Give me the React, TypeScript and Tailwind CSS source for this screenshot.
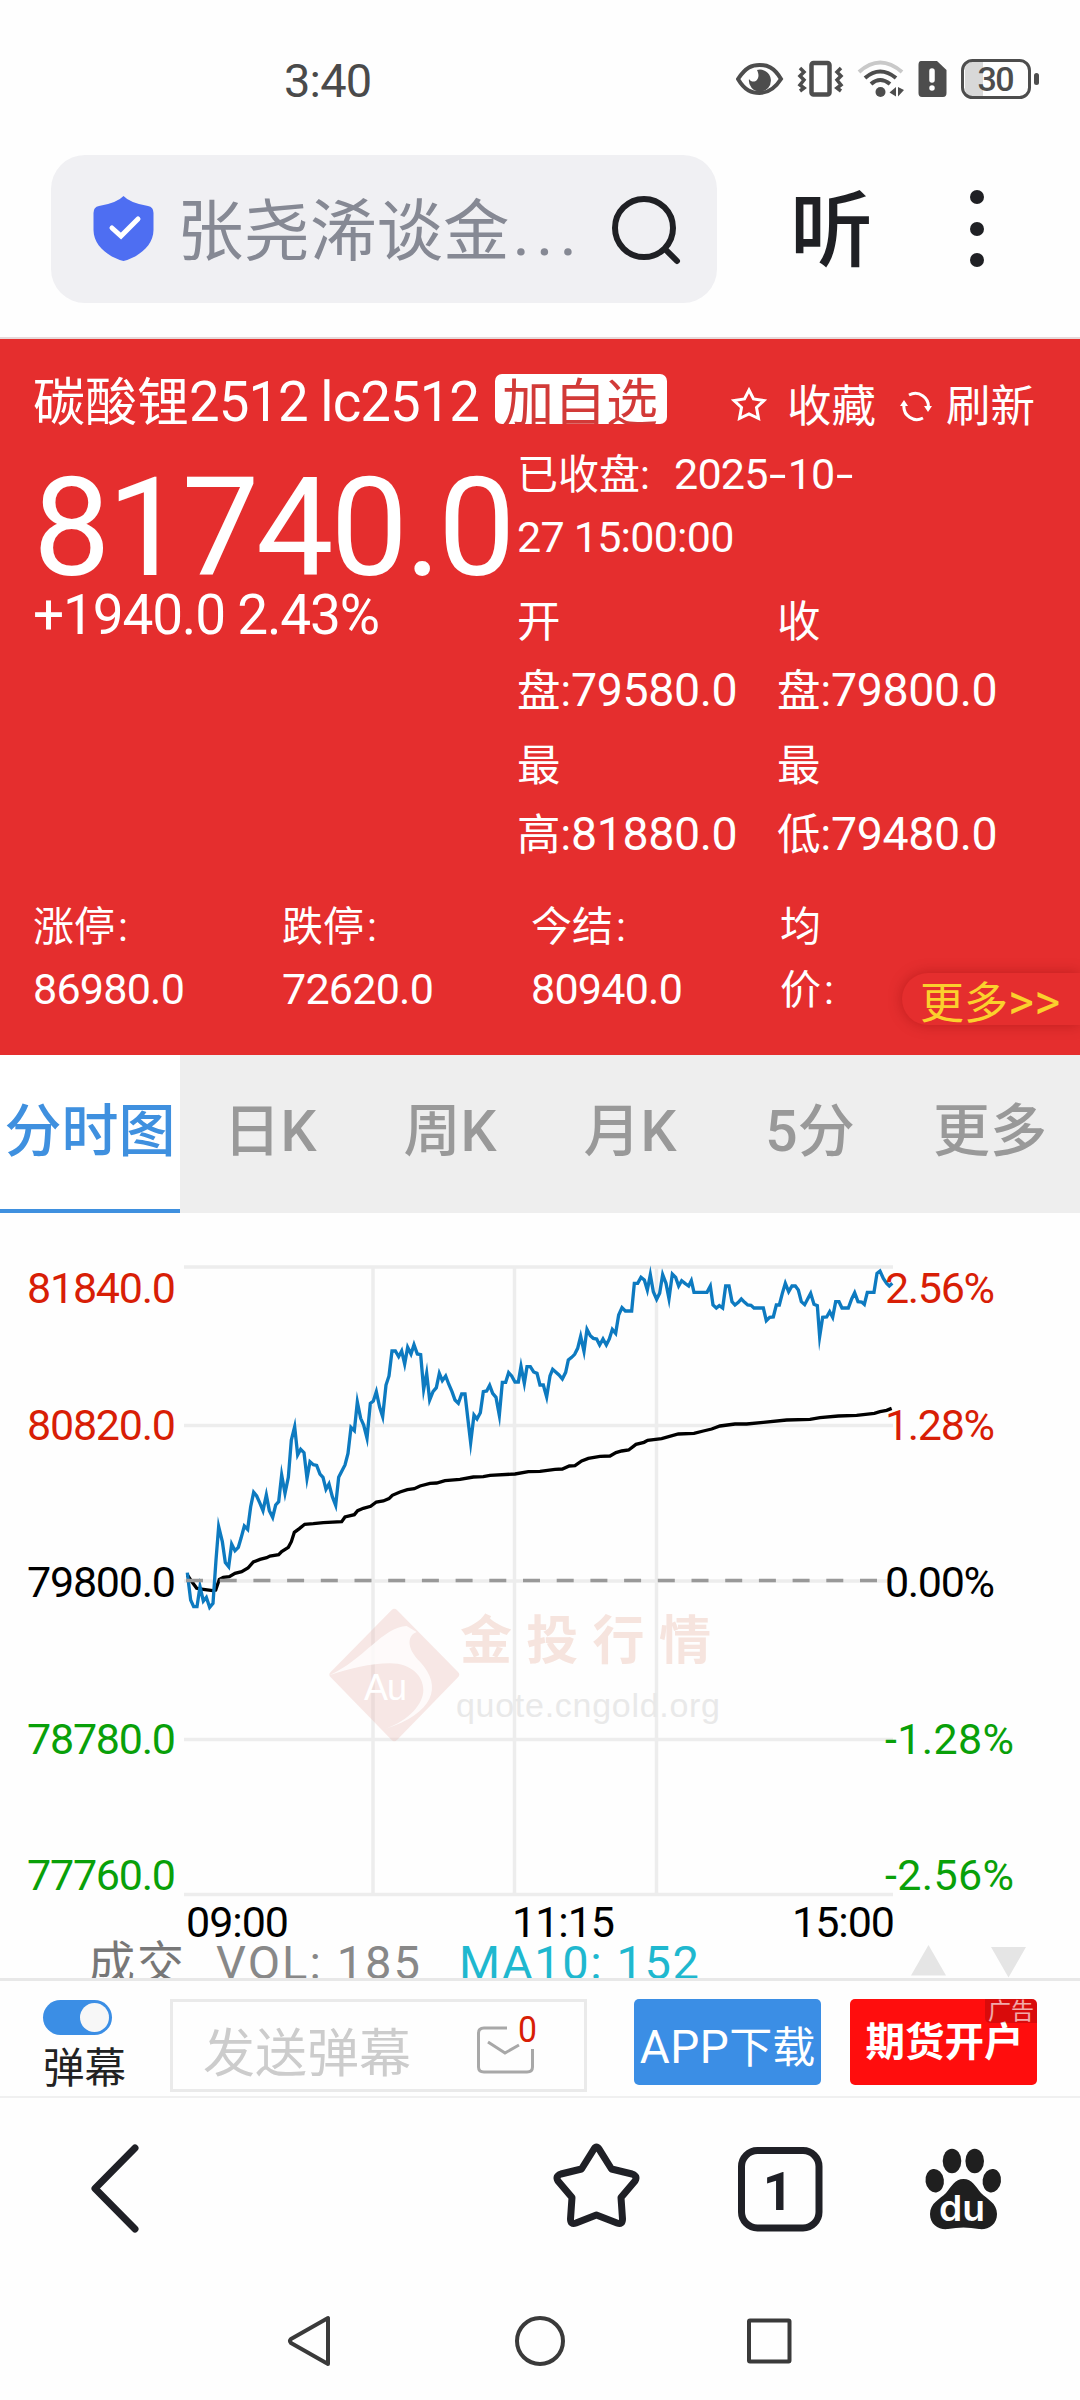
import type { ReactNode } from "react";

// Latin glyphs and digits sit slightly larger than the CJK text around them.
function N({ children }: { children: ReactNode }) {
  return <span className="text-[1.05em] leading-none tracking-[-0.018em]">{children}</span>;
}

function Dash() {
  return <span className="inline-block w-[20px] origin-left translate-x-px scale-x-[1.45]">-</span>;
}

function StatusBar() {
  return (
    <header className="flex h-[155px] shrink-0 items-start pl-[284px] text-[#4a4a4a]">
      <div className="mt-[51px] w-[452px] text-[47px] leading-[60px] tracking-[-0.8px]">3:40</div>
      <svg className="mt-[54px]" width="304" height="52" viewBox="736 54 304 52" fill="none">
        <path d="M738 79C746 67 752 65 759.500 65S774 67 781 79C774 90 767 93 759.500 93S745 91 738 79Z" stroke="#4d4d4d" strokeWidth="4" />
        <path d="M757 70A11 11 0 1 1 749 79C753 85 762 80 757 70Z" fill="#4d4d4d" />
        <rect x="811.500" y="63" width="18" height="31.500" rx="2" stroke="#4d4d4d" strokeWidth="4.500" />
        <path d="M800 68L804 72L800 76L804 80L800 85L804 88L800 91M841 68L837 72L841 76L837 80L841 85L837 88L841 91" stroke="#4d4d4d" strokeWidth="3.500" />
        <path d="M859 72Q880 53 902 72" stroke="#c9c9c9" strokeWidth="4" />
        <path d="M865 78Q880 65 896 78M871 84Q880 76 890 84" stroke="#4d4d4d" strokeWidth="4" />
        <circle cx="880.500" cy="92" r="5" fill="#4d4d4d" />
        <path d="M896 87V96.500L889.500 92.500ZM898 87V96.500L904 90Z" fill="#4d4d4d" />
        <path d="M921 61H937L946.500 70V93Q946.500 97 943 97H922Q918.500 97 918.500 93V65Q918.500 61 921 61Z" fill="#4d4d4d" />
        <path d="M932 71V80M932 88V88.100" stroke="white" strokeWidth="5.500" strokeLinecap="round" />
        <path d="M972 62H983V96H972Q965 96 965 88V70Q965 62 972 62Z" fill="#d8d8d8" />
        <rect x="962.500" y="60.500" width="67" height="37" rx="10" stroke="#4d4d4d" strokeWidth="3" />
        <rect x="1034" y="73" width="5" height="12" rx="2.500" fill="#4d4d4d" />
        <text x="996" y="91" textAnchor="middle" fontSize="34" fontWeight="500" fill="#4d4d4d" fontFamily="Roboto" textLength="37">30</text>
      </svg>
    </header>
  );
}

function AddressBar() {
  return (
    <div className="flex h-[184px] shrink-0 items-start border-b-2 border-[#e6d9da] pl-[51px]">
      <div className="flex h-[148px] w-[666px] items-center rounded-[34px] bg-[#f0f0f3] pl-[41px]">
        <svg width="63" height="70" viewBox="92 195 63 70" fill="none">
          <path d="M123.500 197Q130 204 148 207Q153.500 208 153.500 214V231C153.500 248 136 259 123.500 262C111 259 93.500 248 93.500 231V214Q93.500 208 99 207Q117 204 123.500 197Z" fill="#4e6ef2" />
          <path d="M112 229L121 237L138 220" stroke="white" strokeWidth="5" strokeLinecap="round" />
        </svg>
        <div className="ml-[22px] mt-[6px] w-[430px] shrink-0 whitespace-nowrap text-[66.500px] leading-[80px] text-[#868994]">
          张尧浠谈金<span className="ml-[3px] tracking-[6px]">...</span>
        </div>
        <svg className="shrink-0" width="76" height="76" viewBox="606 190 76 76" fill="none" stroke="#1f2024" strokeWidth="6" strokeLinecap="round">
          <circle cx="643" cy="227" r="29" />
          <path d="M664 248L676 260" />
        </svg>
      </div>
      <div className="ml-[73px] mt-[27px] text-[83px] font-medium leading-[100px] text-[#1f2024]">听</div>
      <div className="ml-[97px] mt-[35px] flex flex-col gap-[17.500px]">
        <i className="size-[14px] rounded-full bg-[#1f2024]" />
        <i className="size-[14px] rounded-full bg-[#1f2024]" />
        <i className="size-[14px] rounded-full bg-[#1f2024]" />
      </div>
    </div>
  );
}

const prices = [
  ["开", "盘", "79580.0"],
  ["收", "盘", "79800.0"],
  ["最", "高", "81880.0"],
  ["最", "低", "79480.0"],
];

function Quote() {
  return (
    <section className="relative flex h-[716px] shrink-0 flex-col overflow-hidden bg-[#e52e2e] text-white">
      <div className="flex h-[104px] pl-[33px]">
        <h1 className="mt-[31px] w-[462px] whitespace-nowrap text-[52px] leading-[68px]">
          碳酸锂<N>2512 lc2512</N>
        </h1>
        <div className="mt-[35px] h-[50px] w-[172px] overflow-hidden rounded-[7px] bg-white pl-[7px] text-[52px] leading-[61px] text-[#d23a38]">
          加自选
        </div>
        <svg className="ml-[64px] mt-[47px]" width="36" height="36" viewBox="0 0 36 36" fill="none" stroke="white" strokeWidth="3">
          <path d="M18 4L22.500 13L33 14.500L25.500 21.500L27.500 32.500L18 28L8.500 32.500L10.500 21.500L3 14.500L13.500 13Z" />
        </svg>
        <span className="ml-[20px] mt-[38px] text-[44.500px] leading-[60px]">收藏</span>
        <svg className="ml-[24px] mt-[52px]" width="32" height="32" viewBox="0 0 32 32" fill="none" stroke="white" strokeWidth="3">
          <path d="M9 4A13 13 0 0 1 28 18M4 14A13 13 0 0 0 23 27" />
          <path d="M24 15H32L28 21ZM0 15H8L4 9Z" fill="white" stroke="none" />
        </svg>
        <span className="ml-[14px] mt-[38px] text-[44.500px] leading-[60px]">刷新</span>
      </div>
      <div className="flex h-[440px] pl-[33px]">
        <div className="w-[484px] whitespace-nowrap">
          <div className="mt-[10px] text-[138px] leading-[150px] tracking-[-3.200px]">81740.0</div>
          <div className="-mt-[26px] text-[55px] leading-[76px] tracking-[-1.200px]">+1940.0 2.43%</div>
        </div>
        <div>
          <div className="mt-[1px] text-[41px] leading-[63px]">
            已收盘: <N>&nbsp;<span className="ml-[4px]">2025</span><Dash />10<Dash /></N>
            <br />
            <N>27 15:00:00</N>
          </div>
          <div className="mt-[19px] grid grid-cols-[260px_260px] gap-y-[7px] text-[43.500px] leading-[68.500px]">
            {prices.map(([a, b, v]) => (
              <div key={v}>
                {a}
                <br />
                {b}:<span className="text-[46.500px] leading-none tracking-[-0.400px]">{v}</span>
              </div>
            ))}
          </div>
        </div>
      </div>
      <div className="mt-[13px] grid grid-cols-[249px_249px_249px_80px] pl-[33px] text-[41px] leading-[63px]">
        <div>涨停<span className="ml-[3px]">:</span><br /><N>86980.0</N></div>
        <div>跌停<span className="ml-[3px]">:</span><br /><N>72620.0</N></div>
        <div>今结<span className="ml-[3px]">:</span><br /><N>80940.0</N></div>
        <div>均<br />价<span className="ml-[3px]">:</span></div>
      </div>
      <div className="absolute right-0 top-[634px] h-[52px] w-[178px] whitespace-nowrap rounded-l-[26px] bg-[#e52e2e] pl-[18px] text-[44px] leading-[62px] text-[#fbd02d] shadow-[0_0_14px_rgba(120,0,0,0.35)]">
        更多<span className="text-[50px] leading-none">&gt;&gt;</span>
      </div>
    </section>
  );
}

function Tabs() {
  return (
    <nav className="grid h-[158px] shrink-0 grid-cols-6 bg-[#eee] text-center text-[57px] font-medium leading-[154px] text-[#999]">
      <div className="whitespace-nowrap border-b-[4px] border-[#3f90df] bg-white text-[#3f90df]">分时图</div>
      <div>日K</div>
      <div>周K</div>
      <div>月K</div>
      <div>5分</div>
      <div>更多</div>
    </nav>
  );
}

// Chart series, stored in thirds of a pixel from the plot origin.
const priceLine =
  "52,998 57,1040 62,1080 71,1100 81,1100 90,1040 100,1083 109,1072 119,1102 129,1090 138,960 146,860 157,905 166,968 176,980 185,912 195,932 205,922 213,895 223,858 233,868 242,800 251,757 260,768 270,790 279,812 289,765 298,812 308,832 317,795 326,785 335,705 345,760 355,712 364,600 374,560 383,645 392,628 402,638 411,715 420,665 430,674 440,676 450,702 459,712 468,748 477,732 487,770 497,796 506,712 516,692 525,675 534,640 543,562 553,572 562,486 572,535 581,555 591,594 601,490 610,483 619,455 629,502 638,530 648,435 657,408 666,333 676,333 686,350 695,333 704,372 713,322 723,342 732,314 742,342 752,344 761,448 770,400 779,480 789,455 799,443 808,400 817,422 827,408 836,432 846,455 855,480 865,490 875,462 885,462 894,540 902,608 912,525 921,537 931,518 940,455 950,453 959,436 968,460 978,472 988,526 997,427 1007,427 1016,398 1025,408 1035,426 1045,426 1053,379 1063,430 1071,380 1081,380 1091,396 1101,400 1110,435 1120,435 1130,471 1140,408 1148,388 1157,396 1167,405 1177,417 1187,397 1195,360 1205,352 1214,343 1223,325 1232,289 1242,334 1251,268 1261,287 1270,295 1280,297 1289,315 1299,297 1309,315 1318,297 1327,268 1337,280 1346,225 1356,203 1366,213 1385,213 1393,130 1403,130 1413,112 1423,120 1432,150 1441,104 1450,155 1460,178 1469,160 1478,104 1488,130 1497,176 1507,102 1517,112 1526,138 1535,122 1545,130 1556,138 1564,122 1572,157 1611,157 1621,138 1629,195 1639,204 1648,197 1658,204 1667,138 1677,138 1686,185 1695,195 1705,187 1714,177 1724,187 1733,195 1743,196 1752,204 1780,204 1789,242 1799,232 1810,231 1819,195 1828,195 1837,160 1846,130 1856,155 1866,138 1876,138 1885,150 1894,185 1904,194 1913,177 1922,160 1932,193 1942,197 1949,290 1958,232 1970,231 1979,215 1988,232 1997,185 2007,185 2016,204 2035,204 2045,177 2054,158 2064,185 2075,186 2083,193 2092,157 2112,157 2121,100 2130,93 2140,115 2150,130 2158,138 2167,130";
const averageLine =
  "52,1005 62,1020 80,1045 100,1048 128,1052 137,1050 148,1018 160,1012 178,1010 195,1000 215,995 234,984 250,966 270,958 290,953 300,948 326,944 335,935 355,922 364,905 373,877 388,866 404,853 430,851 460,848 515,845 525,831 553,824 563,812 580,805 602,799 619,786 640,783 657,776 667,766 690,756 712,749 733,746 750,738 780,730 800,729 825,722 870,718 910,711 940,710 960,706 1035,702 1075,695 1110,694 1155,688 1177,687 1198,678 1215,677 1235,663 1255,655 1290,649 1320,648 1338,638 1355,633 1376,630 1398,613 1422,607 1433,601 1475,596 1525,582 1572,580 1600,573 1625,567 1650,558 1695,552 1730,552 1780,547 1850,540 1920,538 1950,533 2005,528 2060,526 2113,520 2130,515 2150,511 2165,505";

const axis = [
  { y: 1303, price: "81840.0", pct: "2.56%", color: "#d81e06" },
  { y: 1440, price: "80820.0", pct: "1.28%", color: "#d81e06" },
  { y: 1597, price: "79800.0", pct: "0.00%", color: "#000000" },
  { y: 1754, price: "78780.0", pct: "-1.28%", color: "#09a009" },
  { y: 1890, price: "77760.0", pct: "-2.56%", color: "#09a009" },
];

function Chart() {
  return (
    <section className="h-[765px] shrink-0 overflow-hidden">
      <svg width="1080" height="765" viewBox="0 1213 1080 765" fill="none" fontFamily="Roboto, 'Noto Sans CJK SC', sans-serif" fontSize="43">
        <path d="M184 1267H893M184 1425.500H893M184 1581H893M184 1739.500H893M184 1894.500H893M373 1267V1894M514.500 1267V1894M656.500 1267V1894" stroke="#ededed" strokeWidth="3.500" />
        <g transform="translate(300 1580) scale(.33333)">
          <path d="M275 90Q283 82 291 90L474 276Q482 284 474 292L291 480Q283 488 275 480L92 292Q84 284 92 276Z" fill="#e9b9b0" fillOpacity=".32" />
          <path d="M88 286C190 240 250 140 320 138L350 156C325 165 315 200 360 245C430 320 400 400 255 447C330 420 370 370 370 330C370 290 335 250 270 250C210 250 150 265 88 286Z" fill="#ffffff" fillOpacity=".8" />
        </g>
        <text x="364" y="1700" fontFamily="Liberation Sans" fontSize="36" fill="white" textLength="43">Au</text>
        <text x="460" y="1659" fontSize="52" fontWeight="700" fill="#f6e4de" letterSpacing="14.3">金投行情</text>
        <text x="456" y="1717" fontFamily="Liberation Sans" fontSize="34" fill="#e9e9e9" textLength="264">quote.cngold.org</text>
        <g transform="translate(170 1240) scale(.33333)" strokeWidth="10">
          <polyline points={averageLine} stroke="black" />
          <polyline points={priceLine} stroke="#0d7ac0" strokeMiterlimit="10" />
        </g>
        <path d="M186 1580.500H880" stroke="#999" strokeWidth="3.500" strokeDasharray="17 16.700" />
        {axis.map((row) => (
          <g key={row.y} fill={row.color}>
            <text x="27" y={row.y} textLength="149">{row.price}</text>
            <text x="885" y={row.y} textLength={row.pct[0] === "-" ? 129 : 110}>{row.pct}</text>
          </g>
        ))}
        <g fill="black">
          <text x="186" y="1937" textLength="103">09:00</text>
          <text x="512" y="1937" textLength="103">11:15</text>
          <text x="792" y="1937" textLength="103">15:00</text>
        </g>
        <g fontSize="47">
          <text x="88" y="1980" fill="#777" textLength="96">成交</text>
          <text x="216" y="1979" textLength="204" fill="#888">VOL: 185</text>
          <text x="459" y="1979" textLength="240" fill="#1fb8cf">MA10: 152</text>
        </g>
        <path d="M928.500 1945L946 1975.500H911ZM991 1947H1026L1008.500 1977.500Z" fill="#e5e5e5" />
      </svg>
    </section>
  );
}

function CommentBar() {
  return (
    <section className="flex h-[120px] shrink-0 items-start border-b-2 border-t-[3px] border-b-[#f0f0f0] border-t-[#e8e8e8]">
      <div className="ml-[43px] mt-[19px] w-[127px]">
        <div className="flex h-[35px] w-[69px] items-center justify-end rounded-full bg-[#3b8ee5] pr-[3px]">
          <i className="size-[29px] rounded-full bg-[#f7f7f7]" />
        </div>
        <div className="mt-[4px] text-[41.500px] leading-[60px] text-[#222]">弹幕</div>
      </div>
      <div className="mt-[18px] flex h-[93px] w-[417px] border-[3px] border-[#eaeaea] pl-[30px]">
        <span className="mt-[17px] w-[272px] text-[52px] leading-[72px] text-[#ccc]">发送弹幕</span>
        <svg className="mt-[10px]" width="64" height="66" viewBox="475 2010 64 66" fill="none" stroke="#a8a8a8" strokeWidth="3">
          <path d="M507 2026H484Q478.500 2026 478.500 2031V2065Q478.500 2070 484 2070H527Q532.500 2070 532.500 2065V2047M488 2040L505 2051L519 2043" />
          <text x="518" y="2040" fontFamily="Roboto" fontSize="36" fill="#d81e06" stroke="none" textLength="19" lengthAdjust="spacingAndGlyphs">0</text>
        </svg>
      </div>
      <div className="ml-[47px] mt-[18px] h-[86px] w-[187px] whitespace-nowrap rounded-[5px] bg-[#3b8ee5] text-center text-[43px] leading-[99px] text-white">
        <span className="text-[46px] leading-none tracking-[0.500px]">APP</span>下载
      </div>
      <div className="relative ml-[29px] mt-[18px] h-[86px] w-[187px] overflow-hidden rounded-[5px] bg-[#ff0d0d] pl-[2px] text-center text-[39.500px] font-bold leading-[87px] text-white">
        期货开户
        <span className="absolute right-0 top-0 h-[24px] w-[52px] rounded-bl-[5px] bg-black/15 text-[23px] font-normal leading-[25px] text-white/65">广告</span>
      </div>
    </section>
  );
}

function BrowserNav() {
  return (
    <nav className="flex h-[182px] shrink-0 items-start pl-[88px] pt-[42px]">
      <svg width="56" height="96" viewBox="88 2140 56 96" fill="none" stroke="#1f2026" strokeWidth="7" strokeLinecap="round" strokeLinejoin="round">
        <path d="M135 2148L95 2188.500L135 2229" />
      </svg>
      <svg className="ml-[404px]" width="96" height="96" viewBox="548 2140 96 96" fill="none" stroke="#1f2026" strokeWidth="7" strokeLinejoin="round">
        <path d="M594 2149Q596.400 2145 599 2149L611.500 2169L632 2174Q638 2176 635 2181L621 2197.500L622.500 2219Q622.500 2225 617 2223L596.400 2215L576 2223Q570.500 2225 570.500 2219L572 2197.500L558 2181Q555 2176 561 2174L581.500 2169Z" />
      </svg>
      <svg className="ml-[88px]" width="96" height="96" viewBox="732 2140 96 96" fill="none">
        <rect x="741.500" y="2150.500" width="77.500" height="77.500" rx="16" stroke="#1f2026" strokeWidth="7" />
        <text x="778" y="2210" textAnchor="middle" fontFamily="Roboto" fontWeight="700" fontSize="53" fill="#1f2026">1</text>
      </svg>
      <svg className="ml-[88px]" width="96" height="96" viewBox="916 2140 96 96" fill="#1f1f1f">
        <ellipse cx="952" cy="2161" rx="9.300" ry="12.200" />
        <ellipse cx="974.700" cy="2161" rx="9.300" ry="12.200" />
        <ellipse cx="934.700" cy="2180.700" rx="9.200" ry="11.800" transform="rotate(-8 934.700 2180.700)" />
        <ellipse cx="991.800" cy="2180.700" rx="9.200" ry="11.800" transform="rotate(8 991.800 2180.700)" />
        <path d="M963.500 2179C972 2179 976 2187 981 2193C987 2199 997 2203 997 2214C997 2225 988 2230 979 2229Q963.500 2226 948 2229C939 2230 930 2225 930 2214C930 2203 940 2199 946 2193C951 2187 955 2179 963.500 2179Z" />
        <text x="939" y="2221" fontFamily="Inter" fontWeight="600" fontSize="36" fill="white" textLength="46" lengthAdjust="spacingAndGlyphs">du</text>
      </svg>
    </nav>
  );
}

function SystemNav() {
  return (
    <footer className="flex h-[120px] shrink-0 items-start pl-[284px] pt-[32px]">
      <svg width="512" height="58" viewBox="284 2312 512 58" fill="none" stroke="#3a3a3a" strokeWidth="4" strokeLinejoin="round">
        <path d="M328 2318V2364L291 2343Q289 2341 291 2339Z" />
        <circle cx="540" cy="2341" r="23" />
        <rect x="749" y="2320.500" width="40.500" height="41" rx="1" />
      </svg>
    </footer>
  );
}

export default function App() {
  return (
    <main className="flex h-[2400px] w-[1080px] flex-col overflow-hidden bg-[#fefefe] [font-family:Roboto,'Noto_Sans_CJK_SC',sans-serif]">
      <StatusBar />
      <AddressBar />
      <Quote />
      <Tabs />
      <Chart />
      <CommentBar />
      <BrowserNav />
      <SystemNav />
    </main>
  );
}
